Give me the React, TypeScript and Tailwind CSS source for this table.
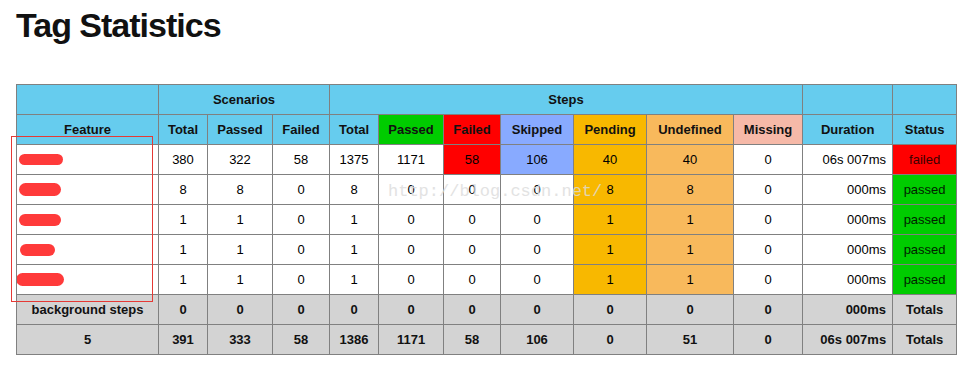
import React from "react";

const CYAN = "bg-[#66CCEE]";
const cols = [142, 49, 65, 57, 49, 65, 57, 73, 73, 87, 69, 90, 64];

type Row = {
  blob: { w: number; ml: number; h: number };
  vals: string[];
  dur: string;
  status: "failed" | "passed";
  colored: boolean[]; // for step cols idx 1..6 (Passed, Failed, Skipped, Pending, Undefined, Missing)
};

const stepBg = [
  "bg-white",
  "bg-[#FF0000]",
  "bg-[#88AAFF]",
  "bg-[#F8B800]",
  "bg-[#F8B95C]",
  "bg-[#F6B9A8]",
];

const rows: Row[] = [
  {
    blob: { w: 44, ml: 2, h: 11 },
    vals: ["380", "322", "58", "1375", "1171", "58", "106", "40", "40", "0"],
    dur: "06s 007ms",
    status: "failed",
    colored: [false, true, true, true, true, false],
  },
  {
    blob: { w: 42, ml: 2, h: 13 },
    vals: ["8", "8", "0", "8", "0", "0", "0", "8", "8", "0"],
    dur: "000ms",
    status: "passed",
    colored: [false, false, false, true, true, false],
  },
  {
    blob: { w: 42, ml: 2, h: 12 },
    vals: ["1", "1", "0", "1", "0", "0", "0", "1", "1", "0"],
    dur: "000ms",
    status: "passed",
    colored: [false, false, false, true, true, false],
  },
  {
    blob: { w: 35, ml: 3, h: 12 },
    vals: ["1", "1", "0", "1", "0", "0", "0", "1", "1", "0"],
    dur: "000ms",
    status: "passed",
    colored: [false, false, false, true, true, false],
  },
  {
    blob: { w: 48, ml: -1, h: 13 },
    vals: ["1", "1", "0", "1", "0", "0", "0", "1", "1", "0"],
    dur: "000ms",
    status: "passed",
    colored: [false, false, false, true, true, false],
  },
];

const td = "border border-[#808080] h-[30px] p-0 text-center align-middle";

export default function App() {
  return (
    <div
      className="w-[971px] h-[377px] bg-white text-black overflow-hidden"
      style={{ fontFamily: '"Liberation Sans", Arial, sans-serif' }}
    >
      <div className="pl-[16px] pt-[6px]">
        <h1 className="text-[34px] leading-[38px] font-bold tracking-[-1px] text-[#111]">
          Tag Statistics
        </h1>
        <div className="relative mt-[40px] w-[940px]">
          <table className="border-collapse table-fixed w-[940px] border border-[#333] text-[13px]">
            <colgroup>
              {cols.map((w, i) => (
                <col key={i} style={{ width: w }} />
              ))}
            </colgroup>
            <thead>
              <tr className="font-bold text-[#111]">
                <th className={`${td} ${CYAN}`}></th>
                <th className={`${td} ${CYAN}`} colSpan={3}>Scenarios</th>
                <th className={`${td} ${CYAN}`} colSpan={7}>Steps</th>
                <th className={`${td} ${CYAN}`}></th>
                <th className={`${td} ${CYAN}`}></th>
              </tr>
              <tr className="font-bold text-[#111]">
                <th className={`${td} ${CYAN}`}>Feature</th>
                <th className={`${td} ${CYAN}`}>Total</th>
                <th className={`${td} ${CYAN}`}>Passed</th>
                <th className={`${td} ${CYAN}`}>Failed</th>
                <th className={`${td} ${CYAN}`}>Total</th>
                <th className={`${td} bg-[#00CC00]`}>Passed</th>
                <th className={`${td} bg-[#FF0000]`}>Failed</th>
                <th className={`${td} bg-[#88AAFF]`}>Skipped</th>
                <th className={`${td} bg-[#F8B800]`}>Pending</th>
                <th className={`${td} bg-[#F8B95C]`}>Undefined</th>
                <th className={`${td} bg-[#F6B9A8]`}>Missing</th>
                <th className={`${td} ${CYAN}`}>Duration</th>
                <th className={`${td} ${CYAN}`}>Status</th>
              </tr>
            </thead>
            <tbody>
              {rows.map((r, ri) => (
                <tr key={ri}>
                  <td className={`${td} text-left bg-white`}>
                    <span
                      className="block rounded-full bg-[#FF3A3A]"
                      style={{ width: r.blob.w, height: r.blob.h, marginLeft: r.blob.ml }}
                    />
                  </td>
                  {r.vals.map((v, i) => {
                    let bg = "bg-white";
                    if (i >= 4) {
                      const si = i - 4;
                      if (r.colored[si]) bg = stepBg[si];
                    }
                    return (
                      <td key={i} className={`${td} ${bg}`}>
                        {v}
                      </td>
                    );
                  })}
                  <td className={`${td} bg-white text-right pr-[6px]`}>{r.dur}</td>
                  <td
                    className={`${td} ${
                      r.status === "failed" ? "bg-[#FF0000] text-[#3a0000]" : "bg-[#00CC00] text-[#002200]"
                    }`}
                  >
                    {r.status}
                  </td>
                </tr>
              ))}
              <tr className="font-bold bg-[#D3D3D3] text-[#111]">
                <td className={td}>background steps</td>
                {["0", "0", "0", "0", "0", "0", "0", "0", "0", "0"].map((v, i) => (
                  <td key={i} className={td}>
                    {v}
                  </td>
                ))}
                <td className={`${td} text-right pr-[6px]`}>000ms</td>
                <td className={td}>Totals</td>
              </tr>
              <tr className="font-bold bg-[#D3D3D3] text-[#111]">
                <td className={td}>5</td>
                {["391", "333", "58", "1386", "1171", "58", "106", "0", "51", "0"].map((v, i) => (
                  <td key={i} className={td}>
                    {v}
                  </td>
                ))}
                <td className={`${td} text-right pr-[6px]`}>06s 007ms</td>
                <td className={td}>Totals</td>
              </tr>
            </tbody>
          </table>
          <div className="pointer-events-none absolute left-[-5px] top-[52px] w-[142px] h-[166px] border border-[#E53935]" />
          <div
            className="pointer-events-none absolute left-[372px] top-[98px] text-[17px] leading-[20px] text-[#dcdcdc] opacity-80"
            style={{ fontFamily: '"Liberation Mono", "Courier New", monospace' }}
          >
            http://blog.csdn.net/
          </div>
        </div>
      </div>
    </div>
  );
}
